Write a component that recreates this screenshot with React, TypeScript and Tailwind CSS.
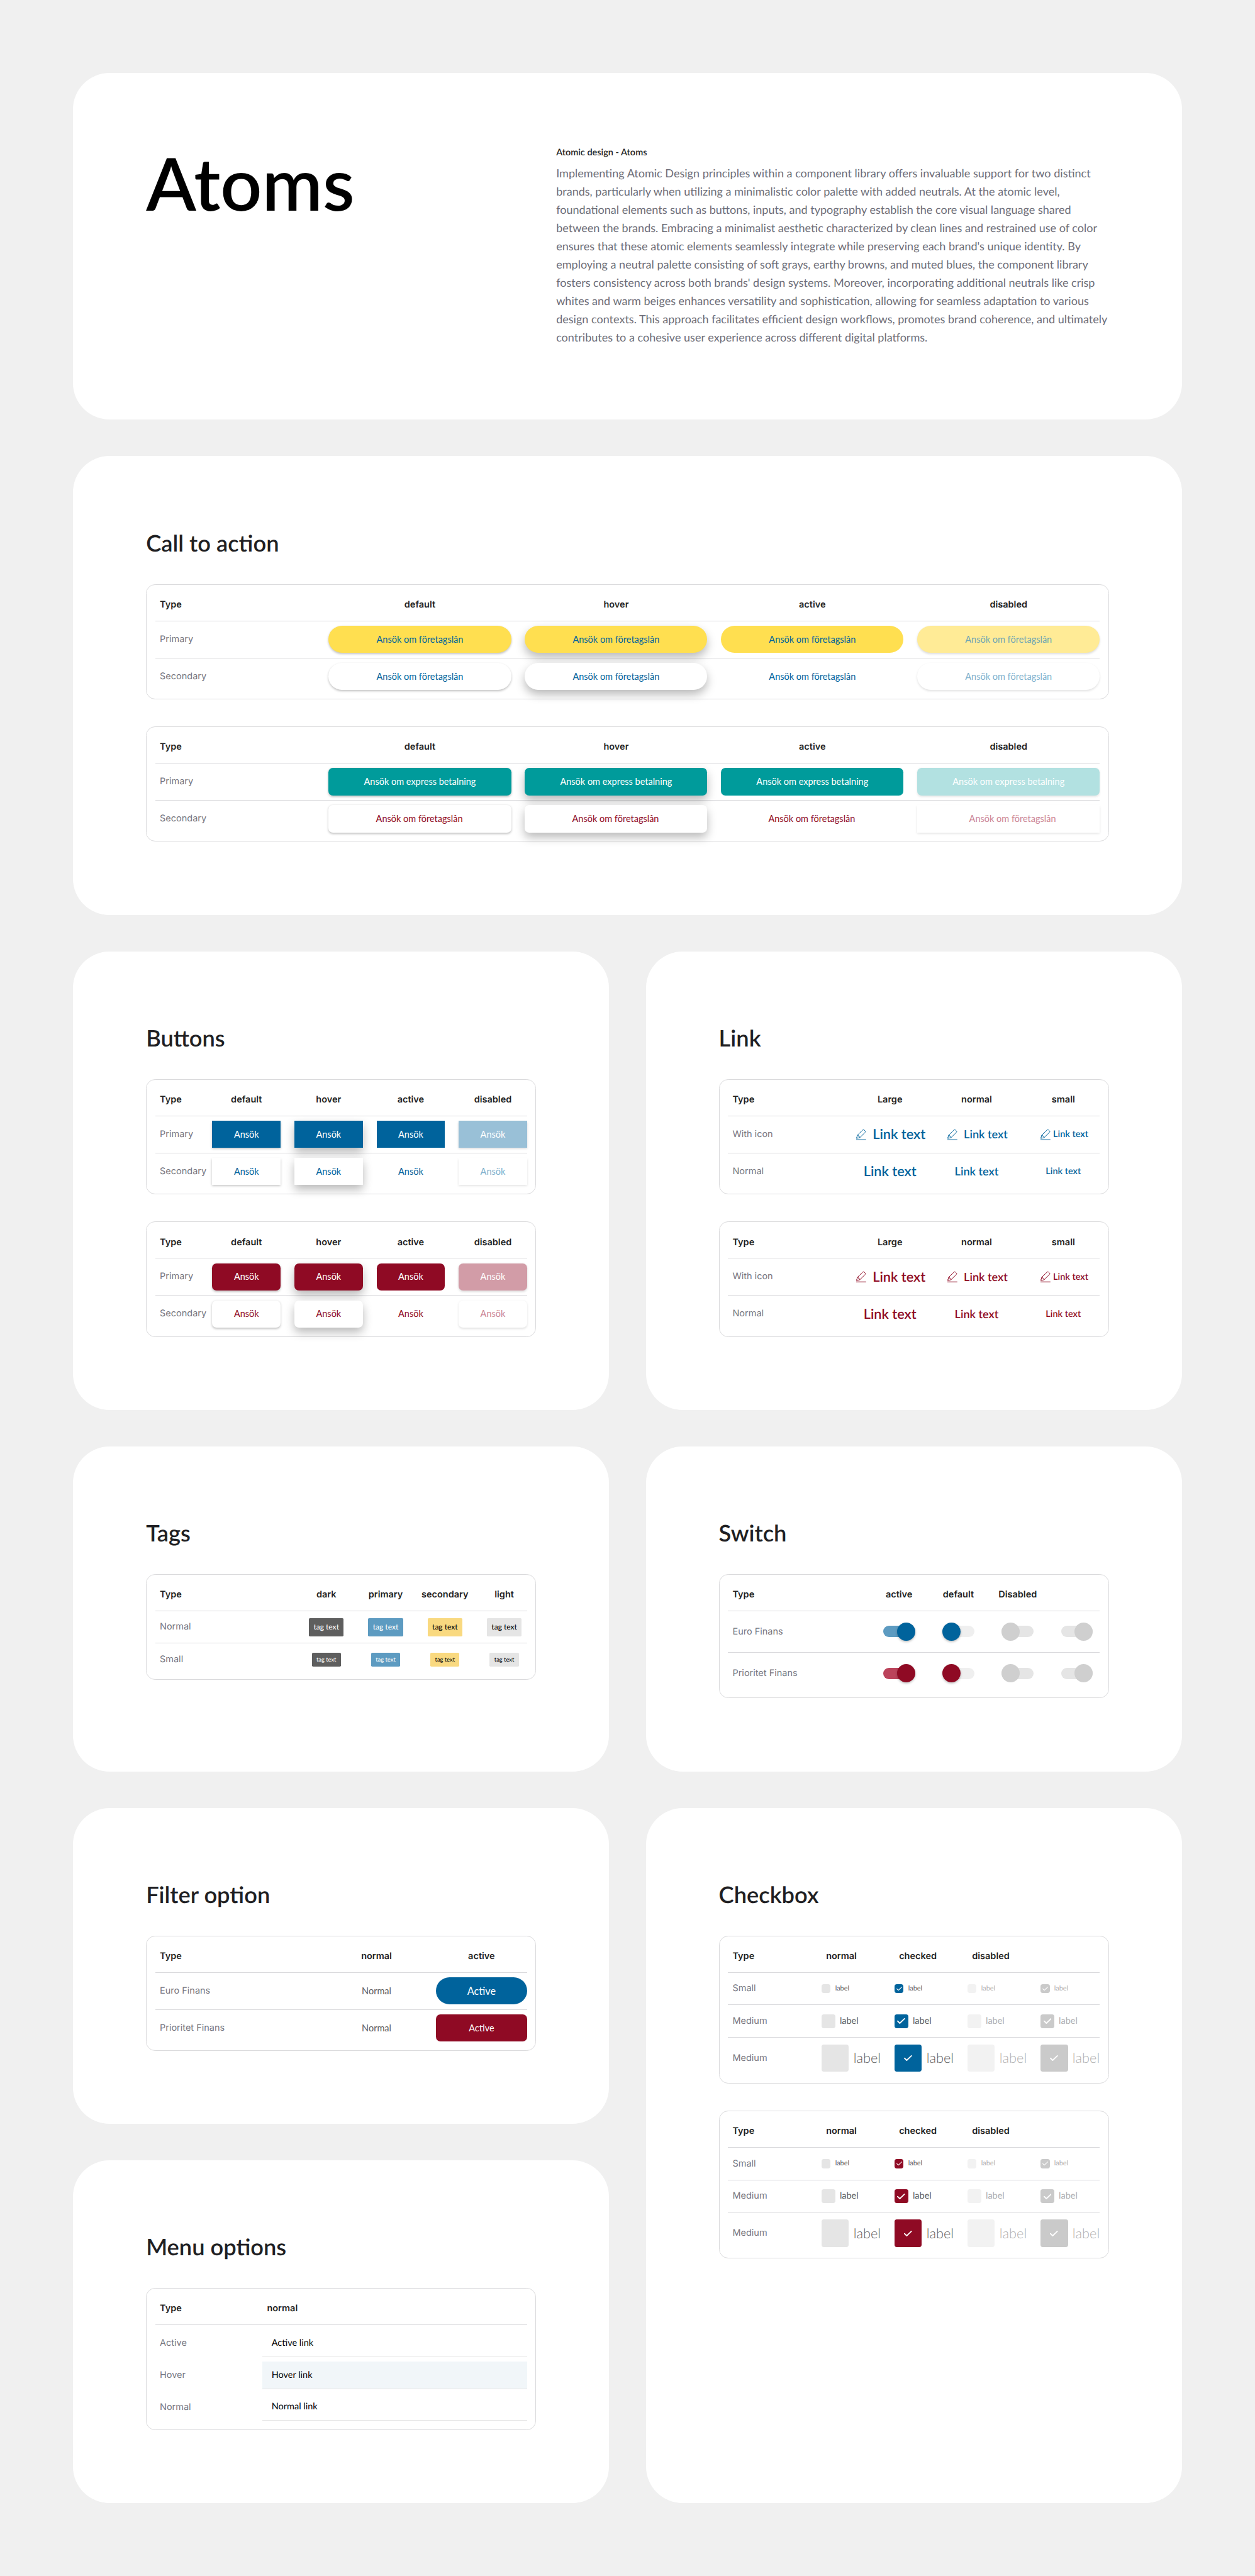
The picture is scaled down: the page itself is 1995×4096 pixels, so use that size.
import type { ReactNode } from "react";
import clsx from "clsx";

type Brand = "euro" | "prioritet";

const LATO = "font-['Lato',sans-serif]";
const SHADOW = "shadow-[0_2px_4px_rgba(0,0,0,0.25)]";
const SHADOW_HOVER = "shadow-[0_8px_16px_rgba(0,0,0,0.28)]";
const BRANDS: Brand[] = ["euro", "prioritet"];

function Card({ title, className, children }: { title: string; className?: string; children: ReactNode }) {
  return (
    <section className={clsx("flex flex-col gap-12 rounded-[64px] bg-white p-32", className)}>
      <h2 className={clsx(LATO, "text-[40px] leading-[48px] font-semibold text-[#1f1f23]")}>{title}</h2>
      {children}
    </section>
  );
}

function Table({ children, className }: { children: ReactNode; className?: string }) {
  return (
    <div className={clsx("box-border rounded-2xl border border-[#dadadc] px-[15px] py-[7px]", className)}>{children}</div>
  );
}

function Row({
  cols,
  label,
  height = "h-[65px]",
  line = true,
  children,
}: {
  cols: string;
  label: string;
  height?: string;
  line?: boolean;
  children: ReactNode;
}) {
  return (
    <div className={clsx("grid items-center gap-6", cols, height, line && "border-b border-[#d9d9dc]")}>
      <span className="pl-2 text-base whitespace-nowrap text-[#767680]">{label}</span>
      {children}
    </div>
  );
}

function Head({ cols, labels, left }: { cols: string; labels: string[]; left?: boolean }) {
  return (
    <div className={clsx("grid h-[57px] items-center gap-6 border-b border-[#d9d9dc] pt-px text-base font-semibold text-[#1f1f23]", cols)}>
      <span className="pl-2">Type</span>
      {labels.map((l, i) => (
        <span key={i} className={clsx("flex whitespace-nowrap", left ? "pl-2" : "justify-center")}>
          {l}
        </span>
      ))}
    </div>
  );
}

function Button({ children, className }: { children: ReactNode; className: string }) {
  return (
    <button className={clsx(LATO, "flex h-12 w-full items-center justify-center whitespace-nowrap", className)}>
      {children}
    </button>
  );
}

const STATES = ["default", "hover", "active", "disabled"];
const stateClass: Record<string, string> = {
  default: SHADOW,
  hover: SHADOW_HOVER,
  active: "",
};

function CallToAction() {
  const cols = "grid-cols-[280px_320px_320px_320px_320px]";
  return (
    <Card title="Call to action" className="h-[804px]">
      <Table className="h-[202px]">
        <Head cols={cols} labels={STATES} />
        <Row cols={cols} label="Primary">
          {STATES.map((s) => (
            <Button
              key={s}
              className={clsx(
                "rounded-full",
                s === "disabled"
                  ? "bg-[#ffeb96] text-[#6fa5b4] shadow-[0_2px_4px_rgba(0,0,0,0.15)]"
                  : ["bg-[#ffdf50] text-[#00639c]", stateClass[s]],
              )}
            >
              Ansök om företagslån
            </Button>
          ))}
        </Row>
        <Row cols={cols} label="Secondary" height="h-[64px]" line={false}>
          {STATES.map((s) => (
            <Button
              key={s}
              className={clsx(
                "rounded-full bg-white",
                s === "disabled" ? "text-[#80b1cd] shadow-[0_2px_4px_rgba(0,0,0,0.12)]" : ["text-[#00639c]", stateClass[s]],
              )}
            >
              Ansök om företagslån
            </Button>
          ))}
        </Row>
      </Table>
      <Table className="h-[202px]">
        <Head cols={cols} labels={STATES} />
        <Row cols={cols} label="Primary">
          {STATES.map((s) => (
            <Button
              key={s}
              className={clsx(
                "rounded-lg text-white",
                s === "disabled" ? "bg-[#b2e1e1] shadow-[0_2px_4px_rgba(0,0,0,0.1)]" : ["bg-[#009b9b]", stateClass[s]],
              )}
            >
              Ansök om express betalning
            </Button>
          ))}
        </Row>
        <Row cols={cols} label="Secondary" height="h-[64px]" line={false}>
          {STATES.map((s) => (
            <Button
              key={s}
              className={clsx(
                "bg-white",
                s === "disabled"
                  ? "pl-3.5 text-[#cb8494] shadow-[0_2px_4px_rgba(0,0,0,0.12)]"
                  : ["rounded-lg pr-0.5 text-[#8f0a24]", stateClass[s]],
              )}
            >
              Ansök om företagslån
            </Button>
          ))}
        </Row>
      </Table>
    </Card>
  );
}

function Buttons() {
  const cols = "grid-cols-[76px_120px_120px_120px_120px]";
  return (
    <Card title="Buttons" className="h-[804px]">
      {BRANDS.map((b) => {
        const euro = b === "euro";
        return (
          <Table key={b} className="h-[202px]">
            <Head cols={cols} labels={STATES} />
            <Row cols={cols} label="Primary">
              {STATES.map((s) => (
                <Button
                  key={s}
                  className={clsx(
                    "text-white",
                    !euro && "rounded-lg",
                    s === "disabled"
                      ? [euro ? "bg-[#99c0d7]" : "bg-[#d29ca7]", "shadow-[0_2px_4px_rgba(0,0,0,0.15)]"]
                      : [euro ? "bg-[#00639c]" : "bg-[#8f0a24]", stateClass[s]],
                  )}
                >
                  Ansök
                </Button>
              ))}
            </Row>
            <Row cols={cols} label="Secondary" height="h-[64px]" line={false}>
              {STATES.map((s) => (
                <Button
                  key={s}
                  className={clsx(
                    "bg-white",
                    !euro && "rounded-lg",
                    s === "disabled"
                      ? [euro ? "text-[#80b1cd]" : "text-[#cb8494]", "shadow-[0_2px_4px_rgba(0,0,0,0.12)]"]
                      : [euro ? "text-[#00639c]" : "text-[#8f0a24]", stateClass[s]],
                  )}
                >
                  Ansök
                </Button>
              ))}
            </Row>
          </Table>
        );
      })}
    </Card>
  );
}

function PencilIcon() {
  return (
    <svg viewBox="0 0 24 24" fill="none" stroke="currentColor" className="size-6 shrink-0">
      <path
        d="M3.9 18.9 5.4 13.3 15.2 3.9c.6-.6 1.4-.6 2 0l2.100 2c.6.6.6 1.400.1 2L9.600 17.600ZM5.400 13.300c1.500-.1 2.200.5 2.100 2 1.500-.1 2.200.7 2.100 2.300M4.500 17.300l1.200 1.200"
        strokeWidth="1.1"
        strokeLinejoin="round"
      />
      <path d="M3.300 21.300h17.400" strokeWidth="1.200" />
    </svg>
  );
}

function Links() {
  const cols = "grid-cols-[196px_128px_128px_128px]";
  const sizes = [
    { text: "text-2xl leading-8", gap: "gap-2" },
    { text: "text-xl leading-8", gap: "gap-2" },
    { text: "text-base leading-8", gap: "gap-0.5" },
  ];
  return (
    <Card title="Link" className="h-[804px]">
      {BRANDS.map((b) => {
        const color = b === "euro" ? "text-[#00639c]" : "text-[#8f0a24]";
        return (
          <Table key={b} className="h-[202px]">
            <Head cols={cols} labels={["Large", "normal", "small"]} />
            <Row cols={cols} label="With icon">
              {sizes.map((s) => (
                <a key={s.text} className={clsx(LATO, "flex items-center justify-center font-semibold whitespace-nowrap", s.text, s.gap, color)}>
                  <PencilIcon />
                  Link text
                </a>
              ))}
            </Row>
            <Row cols={cols} label="Normal" height="h-[64px]" line={false}>
              {sizes.map((s) => (
                <a key={s.text} className={clsx(LATO, "flex items-center justify-center font-semibold whitespace-nowrap", s.text, color)}>
                  Link text
                </a>
              ))}
            </Row>
          </Table>
        );
      })}
    </Card>
  );
}

function Tags() {
  const cols = "grid-cols-[236px_80px_80px_80px_80px]";
  const tones = ["bg-[#5e5e5e] text-white", "bg-[#5d9bc1] text-white", "bg-[#f9d980] text-black", "bg-[#e5e5e5] text-black"];
  return (
    <Card title="Tags" className="h-[570px]">
      <Table className="h-[186px]">
        <Head cols={cols} labels={["dark", "primary", "secondary", "light"]} />
        <Row cols={cols} label="Normal" height="h-[57px]">
          {tones.map((t) => (
            <span key={t} className={clsx(LATO, "flex h-8 w-[61px] items-center justify-center justify-self-center rounded-[2px] text-[13.2px] font-medium whitespace-nowrap", t)}>
              tag text
            </span>
          ))}
        </Row>
        <Row cols={cols} label="Small" height="h-[56px]" line={false}>
          {tones.map((t) => (
            <span key={t} className={clsx(LATO, "flex h-6 w-[51px] items-center justify-center justify-self-center rounded-[2px] text-[10.3px] font-medium whitespace-nowrap", t)}>
              tag text
            </span>
          ))}
        </Row>
      </Table>
    </Card>
  );
}

function Toggle({ on, track, thumb, shadow }: { on: boolean; track: string; thumb: string; shadow?: boolean }) {
  return (
    <span className="flex h-8 w-14 items-center justify-self-center">
      <span className={clsx("flex h-5 w-full items-center rounded-full", track, on ? "justify-end" : "justify-start")}>
        <span className={clsx("size-8 shrink-0 rounded-full", thumb, shadow && SHADOW)} />
      </span>
    </span>
  );
}

function Switches() {
  const cols = "grid-cols-[236px_80px_80px_80px_80px]";
  return (
    <Card title="Switch" className="h-[570px]">
      <Table className="h-[218px]">
        <Head cols={cols} labels={["active", "default", "Disabled", ""]} />
        {BRANDS.map((b) => {
          const euro = b === "euro";
          const thumb = euro ? "bg-[#00639c]" : "bg-[#8f0a24]";
          return (
            <Row key={b} cols={cols} label={euro ? "Euro Finans" : "Prioritet Finans"} height={euro ? "h-[73px]" : "h-[72px]"} line={euro}>
              <Toggle on track={euro ? "bg-[#5d9bc1]" : "bg-[#bb435b]"} thumb={thumb} shadow />
              <Toggle on={false} track="bg-[#efefef]" thumb={thumb} shadow />
              <Toggle on={false} track="bg-[#e5e5e5]" thumb="bg-[#cfcfcf]" />
              <Toggle on track="bg-[#e5e5e5]" thumb="bg-[#cfcfcf]" />
            </Row>
          );
        })}
      </Table>
    </Card>
  );
}

function FilterOption() {
  const cols = "grid-cols-[284px_160px_160px]";
  return (
    <Card title="Filter option" className="h-[554px]">
      <Table className="h-[202px]">
        <Head cols={cols} labels={["normal", "active"]} />
        <Row cols={cols} label="Euro Finans">
          <Button className="text-[#5e5e5e]">Normal</Button>
          <Button className="rounded-full bg-[#00639c] text-lg text-white">Active</Button>
        </Row>
        <Row cols={cols} label="Prioritet Finans" height="h-[64px]" line={false}>
          <Button className="text-[#5e5e5e]">Normal</Button>
          <Button className="rounded-lg bg-[#8f0a24] text-white">Active</Button>
        </Row>
      </Table>
    </Card>
  );
}

function MenuOptions() {
  const cols = "grid-cols-[164px_464px]";
  return (
    <Card title="Menu options" className="h-[601px]">
      <Table className="h-[249px]">
        <Head cols={cols} labels={["normal"]} left />
        <div className="flex flex-col gap-2 py-2">
          {["Active", "Hover", "Normal"].map((s) => (
            <Row key={s} cols={cols} label={s} height="h-12" line={false}>
              <a
                className={clsx(
                  LATO,
                  "flex h-12 items-center border-b border-[#e5e5e5] px-4 text-base text-black",
                  s === "Hover" && "bg-[#f1f6f9]",
                )}
              >
                {s} link
              </a>
            </Row>
          ))}
        </div>
      </Table>
    </Card>
  );
}

function Check({ size, width }: { size: string; width: number }) {
  return (
    <svg viewBox="0 0 14 10" fill="none" stroke="white" className={size}>
      <path d="M1 5.200 4.800 8.800 13 1" strokeWidth={width} strokeLinecap="round" strokeLinejoin="round" />
    </svg>
  );
}

function Checkboxes() {
  const cols = "grid-cols-[140px_104px_104px_104px_104px]";
  const sizes = [
    { label: "Small", row: "h-[57px]", box: "size-4 rounded-[4px]", text: "text-xs", check: "w-2.5", width: 1.8 },
    { label: "Medium", row: "h-[57px]", box: "size-6 rounded-[4px]", text: "text-base", check: "w-3.5", width: 2 },
    { label: "Medium", row: "h-[72px]", box: "size-12 rounded-[4px]", text: "text-2xl font-light", check: "w-3.5", width: 2 },
  ];
  return (
    <Card title="Checkbox" className="h-[1219px]">
      {BRANDS.map((b) => {
        const tones = [
          { bg: "bg-[#e5e5e5]", text: "text-[#5e5e5e]", on: false },
          { bg: b === "euro" ? "bg-[#00639c]" : "bg-[#8f0a24]", text: "text-[#5e5e5e]", on: true },
          { bg: "bg-[#f2f2f2]", text: "text-[#afafaf]", on: false },
          { bg: "bg-[#cacaca]", text: "text-[#afafaf]", on: true },
        ];
        return (
          <Table key={b} className="h-[259px]">
            <Head cols={cols} labels={["normal", "checked", "disabled", ""]} left />
            {sizes.map((s, i) => (
              <Row key={i} cols={cols} label={s.label} height={s.row} line={i < 2}>
                {tones.map((t) => (
                  <label key={t.bg} className={clsx(LATO, "flex items-center gap-2", s.text, t.text)}>
                    <span className={clsx("flex shrink-0 items-center justify-center", s.box, t.bg)}>
                      {t.on && <Check size={s.check} width={s.width} />}
                    </span>
                    label
                  </label>
                ))}
              </Row>
            ))}
          </Table>
        );
      })}
    </Card>
  );
}

const INTRO = [
  "Implementing Atomic Design principles within a component library offers invaluable support for two distinct",
  "brands, particularly when utilizing a minimalistic color palette with added neutrals. At the atomic level,",
  "foundational elements such as buttons, inputs, and typography establish the core visual language shared",
  "between the brands. Embracing a minimalist aesthetic characterized by clean lines and restrained use of color",
  "ensures that these atomic elements seamlessly integrate while preserving each brand's unique identity. By",
  "employing a neutral palette consisting of soft grays, earthy browns, and muted blues, the component library",
  "fosters consistency across both brands' design systems. Moreover, incorporating additional neutrals like crisp",
  "whites and warm beiges enhances versatility and sophistication, allowing for seamless adaptation to various",
  "design contexts. This approach facilitates efficient design workflows, promotes brand coherence, and ultimately",
  "contributes to a cohesive user experience across different digital platforms.",
];

export default function App() {
  return (
    <main className="flex h-[4517px] w-[2200px] flex-col gap-16 overflow-hidden bg-[#f0f0f0] p-32 font-['Inter',sans-serif] [text-rendering:geometricPrecision] [zoom:0.90682]">
      <header className={clsx(LATO, "flex h-[608px] shrink-0 justify-between rounded-[64px] bg-white p-32")}>
        <h1 className="text-[128px] leading-none font-semibold text-black">Atoms</h1>
        <div className="flex w-[969px] flex-col gap-2">
          <h3 className="text-base font-semibold text-[#1f1f23]">Atomic design - Atoms</h3>
          <p className="text-[19.9px] leading-8 whitespace-nowrap text-[#6e6e78]">
            {INTRO.map((line) => (
              <span key={line} className="block">
                {line}
              </span>
            ))}
          </p>
        </div>
      </header>
      <CallToAction />
      <div className="grid grid-cols-2 gap-16">
        <Buttons />
        <Links />
        <Tags />
        <Switches />
        <div className="flex flex-col gap-16">
          <FilterOption />
          <MenuOptions />
        </div>
        <Checkboxes />
      </div>
    </main>
  );
}
